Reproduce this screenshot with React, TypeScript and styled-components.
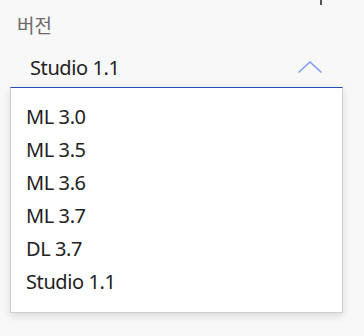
import React from 'react';
import styled, { createGlobalStyle } from 'styled-components';

const GlobalStyle = createGlobalStyle`
  html, body {
    margin: 0;
    padding: 0;
    background: #f8f8f8;
    font-family: "Noto Sans", "Noto Sans CJK KR", sans-serif;
  }
`;

const Page = styled.div`
  position: relative;
  width: 364px;
  height: 336px;
  overflow: hidden;
  padding: 14px 0 0 10px;
  box-sizing: border-box;
`;

const CornerMark = styled.div`
  position: absolute;
  top: 0;
  right: 42px;
  width: 2px;
  height: 5px;
  background: #555;
`;

const Label = styled.div`
  padding-left: 7px;
  font-size: 19px;
  line-height: 24px;
  color: #6a6a6a;
`;

const Field = styled.div`
  width: 333px;
  margin-top: 17px;
`;

const SelectRow = styled.div`
  display: flex;
  align-items: center;
  justify-content: space-between;
  padding: 0 20px 0 20px;
  height: 24px;
  margin-bottom: 8px;
`;

const Value = styled.span`
  font-size: 20px;
  letter-spacing: -0.4px;
  color: #222;
`;

const Menu = styled.ul`
  list-style: none;
  margin: 0;
  padding: 12px 0 14px;
  background: #fff;
  border: 1px solid #cfcfcf;
  border-top: 1px solid #2a4cc0;
  box-shadow: 0 3px 8px rgba(0, 0, 0, 0.12);
`;

const Item = styled.li`
  height: 33px;
  line-height: 33px;
  padding-left: 15px;
  font-size: 20px;
  letter-spacing: -0.4px;
  color: #222;
`;

const Chevron = () => (
  <svg width="26" height="14" viewBox="0 0 26 14" fill="none">
    <path d="M1.5 12.5 L13 2 L24.5 12.5" stroke="#7f9bf0" strokeWidth="1.6" />
  </svg>
);

const versions = ['ML 3.0', 'ML 3.5', 'ML 3.6', 'ML 3.7', 'DL 3.7', 'Studio 1.1'];

export default function App() {
  return (
    <Page>
      <GlobalStyle />
      <CornerMark />
      <Label>버전</Label>
      <Field>
        <SelectRow>
          <Value>Studio 1.1</Value>
          <Chevron />
        </SelectRow>
        <Menu>
          {versions.map(v => (
            <Item key={v}>{v}</Item>
          ))}
        </Menu>
      </Field>
    </Page>
  );
}
